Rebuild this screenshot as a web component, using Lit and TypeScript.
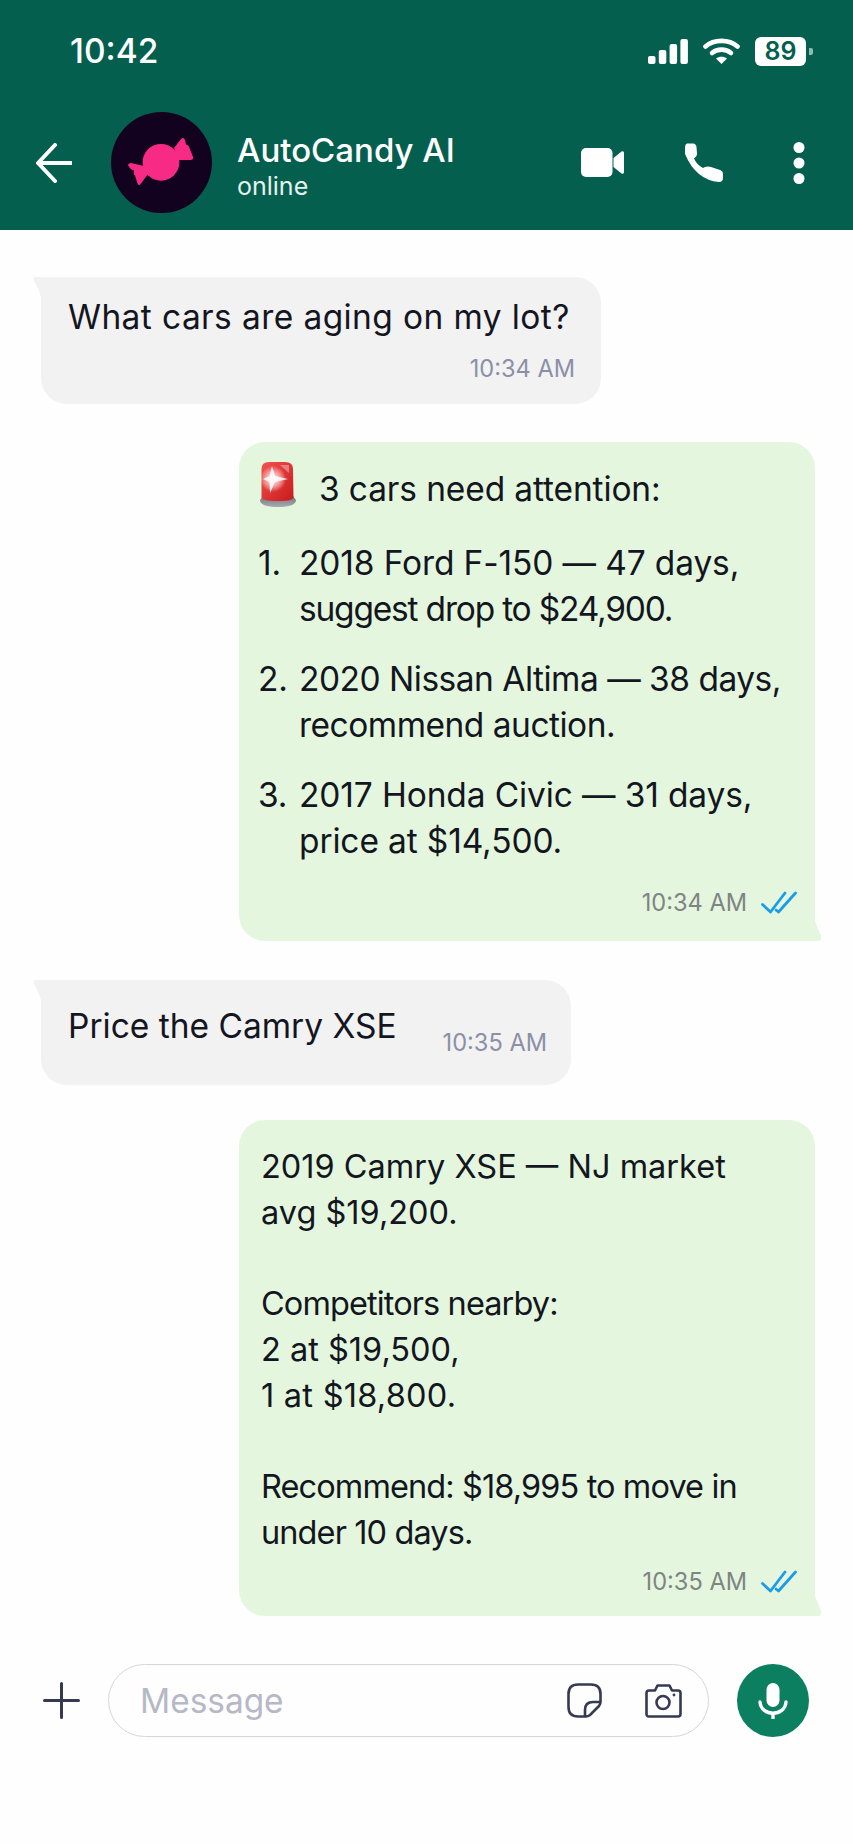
import { LitElement, html, css, svg } from 'lit';
import { customElement } from 'lit/decorators.js';

const checks = html`<svg class="checks" viewBox="0 0 36 24" width="36" height="24" fill="none" stroke="#1b9ce9" stroke-width="2.8" stroke-linecap="round" stroke-linejoin="round">
  <path d="M1.5 13.5 L9.5 21 L24 2" /><path d="M15 19 L17.5 21 L34.5 2" />
</svg>`;

const tailLeft = html`<svg class="tail tail-left" viewBox="0 0 10 20" width="10" height="20"><path d="M10 0 H3 Q-1 0 1 4 Q5 10 8 20 H10 Z" fill="#f2f2f3"/></svg>`;
const tailRight = html`<svg class="tail tail-right" viewBox="0 0 8 20" width="8" height="20"><path d="M0 20 H4 Q8 20 7 15 L1 0 H0 Z" fill="#e4f7de"/></svg>`;

@customElement('app-root')
export class AppRoot extends LitElement {
  static styles = css`
    :host {
      display: block;
      width: 853px;
      height: 1844px;
      background: #fefefe;
      font-family: Inter, 'Liberation Sans', sans-serif;
      color: #14161f;
      overflow: hidden;
    }
    .top { background: #045f4e; height: 230px; color: #fff; display: flex; flex-direction: column; }
    .status { height: 102px; display: flex; align-items: center; justify-content: space-between; padding: 0 40px 0 70px; }
    .clock { font-size: 33.5px; font-weight: 500; }
    .status-icons { display: flex; align-items: center; gap: 15px; }
    .battery { width: 51px; height: 29px; background: #fff; border-radius: 6px; color: #045f4e; font-size: 25px; font-weight: 600; display: flex; align-items: center; justify-content: center; }
    .cap { width: 4px; height: 7px; background: #8fbcb1; border-radius: 0 2px 2px 0; margin-left: -12px; }
    .bar { display: flex; align-items: center; padding: 10px 0 0 36px; }
    .avatar { width: 101px; height: 101px; margin-left: 39px; flex: none; }
    .who { margin-left: 25px; padding-top: 7px; flex: 1; display: flex; flex-direction: column; }
    .name { font-size: 33px; font-weight: 500; line-height: 38px; }
    .online { font-size: 25px; line-height: 32px; margin-top: 1px; color: #e6f2ef; }
    .actions { display: flex; align-items: center; padding-right: 48px; }
    .actions .phone { margin: 0 69px 0 60px; }

    .chat { display: flex; flex-direction: column; padding: 47px 38px 0 41px; }
    .bubble { position: relative; box-sizing: border-box; font-size: 33.5px; line-height: 46px; border-radius: 26px; }
    .in { background: #f2f2f3; align-self: flex-start; border-top-left-radius: 0; }
    .out { background: #e4f7de; align-self: flex-end; width: 576px; border-bottom-right-radius: 0; }
    .tail { position: absolute; }
    .tail-left { top: 0; left: -8px; }
    .tail-right { bottom: 0; right: -7px; }
    .q1 { width: 560px; height: 127px; padding: 17px 26px 0 27px; }
    .q1 .text { letter-spacing: 0.4px; }
    .q2 { width: 530px; height: 105px; margin-top: 39px; padding: 23px 24px 0 27px; display: flex; justify-content: space-between; }
    .q2 .time { margin-top: 25px; }
    .a1 { height: 499px; margin-top: 38px; padding: 24px 18px 0 19px; letter-spacing: -0.13px; }
    .a2 { height: 496px; margin-top: 35px; padding: 24px 18px 0 22px; font-size: 32.5px; }
    .a2 p { margin: 0 0 45px; }
    .time { font-size: 23.6px; line-height: 30px; color: #8b90a6; white-space: nowrap; letter-spacing: 0; }
    .out .time { color: #808484; }
    .meta { display: flex; justify-content: flex-end; align-items: center; gap: 14px; }
    .q1 .meta { margin-top: 14px; }
    .a1 .meta { margin-top: 24px; }
    .a2 .meta { margin-top: 11px; }
    .alert { display: flex; align-items: center; gap: 23px; height: 46px; padding-left: 2px; }
    .siren { margin-bottom: 10px; flex: none; }
    .list { margin: 28px 0 0; padding: 0; list-style: none; display: flex; flex-direction: column; gap: 24px; }
    .list li { display: grid; grid-template-columns: 41px 1fr; }
    .tight { letter-spacing: -0.5px; }
    .tighter { letter-spacing: -0.9px; }
    .tightest { letter-spacing: -1.2px; }
    .wide { letter-spacing: 0.25px; }

    .composer { display: flex; align-items: center; padding: 48px 44px 0 43px; }
    .pill { box-sizing: border-box; width: 601px; height: 73px; margin-left: 28px; border: 1.5px solid #d6d6dc; border-radius: 37px; display: flex; align-items: center; padding: 0 26px 0 31px; }
    .placeholder { flex: 1; font-size: 33.4px; color: #b6b8c6; }
    .pill .sticker { margin-right: 43px; }
    .mic { width: 72px; height: 73px; margin-left: 28px; border-radius: 50%; background: #0b7f5f; display: flex; align-items: center; justify-content: center; flex: none; }
  `;

  render() {
    return html`
      <div class="top">
        <div class="status">
          <span class="clock">10:42</span>
          <div class="status-icons">
            <svg width="40" height="25" viewBox="0 0 40 25" fill="#fff">
              <rect x="0" y="17" width="7.5" height="8" rx="2"/><rect x="10.8" y="11" width="7.5" height="14" rx="2"/>
              <rect x="21.6" y="5" width="7.5" height="20" rx="2"/><rect x="32.4" y="0" width="7.5" height="25" rx="2"/>
            </svg>
            <svg width="37" height="26" viewBox="0 0 37 26" fill="none" stroke="#fff" stroke-width="4.6" stroke-linecap="round">
              <path d="M2.5 8.5 C11 1 26 1 34.5 8.5"/><path d="M9 15 C14 10.5 23 10.5 28 15"/>
              <path d="M18.5 26 L13 20.5 C16 18 21 18 24 20.5 Z" fill="#fff" stroke="none"/>
            </svg>
            <span class="battery">89</span><span class="cap"></span>
          </div>
        </div>
        <div class="bar">
          <svg width="36" height="40" viewBox="0 0 36 40" fill="none" stroke="#fff" stroke-width="4" stroke-linecap="round" stroke-linejoin="round">
            <path d="M19 2 L2 20 L19 38"/><path d="M3 20 H35"/>
          </svg>
          <svg class="avatar" viewBox="0 0 101 101">
            <circle cx="50.5" cy="50.5" r="50.5" fill="#13021f"/>
            <g fill="#f72a85">
              <path d="M33 54 L20 51 Q16 51.5 17.5 54 Q20 58 23 58.5 Q22 62 24 63.5 L26.5 71.5 Q28 74.5 30 71.5 L37 62 Z"/>
              <path d="M63 36 L70 27 Q72.5 24.5 74 28 L75 32.5 Q78 33 78.5 36 L82 45 Q83 48 79 48 L68 48 Z"/>
              <circle cx="50" cy="50.3" r="18.4"/>
            </g>
          </svg>
          <div class="who">
            <span class="name">AutoCandy AI</span>
            <span class="online">online</span>
          </div>
          <div class="actions">
            <svg width="43" height="29" viewBox="0 0 43 29" fill="#fff">
              <rect x="0" y="0" width="31.5" height="29" rx="5"/><path d="M32.5 10 L40.5 3.5 Q43 2.5 43 5 V24 Q43 26.5 40.5 25.5 L32.5 19 Z"/>
            </svg>
            <svg class="phone" width="40" height="40" viewBox="0 0 40 40" fill="#fff">
              <path d="M3 0.5 H9 Q12 0.5 12.5 4 L13 11 Q13 13 11 14.5 L10 15.5 Q13 22 19 25 L21 24 Q24 23 27 24 L36 27 Q39 28 39 31 V35 Q39 39 35 39 Q12 37 1 11 V4 Q1 1 3 0.5 Z"/>
            </svg>
            <svg width="12" height="42" viewBox="0 0 12 42" fill="#fff">
              <circle cx="6" cy="5.5" r="5.5"/><circle cx="6" cy="21" r="5.5"/><circle cx="6" cy="36.5" r="5.5"/>
            </svg>
          </div>
        </div>
      </div>

      <div class="chat">
        <div class="bubble in q1">
          ${tailLeft}
          <div class="text">What cars are aging on my lot?</div>
          <div class="meta"><span class="time">10:34 AM</span></div>
        </div>

        <div class="bubble out a1">
          ${tailRight}
          <div class="alert">
            ${this.siren()}
            <span>3 cars need attention:</span>
          </div>
          <ol class="list">
            <li><span>1.</span><span>2018 Ford F-150 — 47 days,<br /><span class="tightest">suggest drop to $24,900.</span></span></li>
            <li><span>2.</span><span><span class="tight">2020 Nissan Altima — 38 days,</span><br /><span class="tight">recommend auction.</span></span></li>
            <li><span>3.</span><span>2017 Honda Civic — 31 days,<br />price at $14,500.</span></li>
          </ol>
          <div class="meta"><span class="time">10:34 AM</span>${checks}</div>
        </div>

        <div class="bubble in q2">
          ${tailLeft}
          <span>Price the Camry XSE</span>
          <span class="time">10:35 AM</span>
        </div>

        <div class="bubble out a2">
          ${tailRight}
          <p>2019 Camry XSE — NJ market<br />avg $19,200.</p>
          <p><span class="tighter">Competitors nearby:</span><br />2 at $19,500,<br /><span class="wide">1 at $18,800.</span></p>
          <div><span class="tighter">Recommend: $18,995 to move in</span><br /><span class="tighter">under 10 days.</span></div>
          <div class="meta"><span class="time">10:35 AM</span>${checks}</div>
        </div>
      </div>

      <div class="composer">
        <svg width="37" height="37" viewBox="0 0 37 37" stroke="#343a52" stroke-width="3" stroke-linecap="round">
          <path d="M18.5 1.5 V35.5 M1.5 18.5 H35.5"/>
        </svg>
        <div class="pill">
          <span class="placeholder">Message</span>
          <svg class="sticker" width="35" height="35" viewBox="0 0 35 35" fill="none" stroke="#343a52" stroke-width="2.6" stroke-linejoin="round">
            <path d="M11 1.5 H24 Q33.5 1.5 33.5 11 V19 Q33.5 21 32 23 L23 32 Q21 33.5 19 33.5 H11 Q1.5 33.5 1.5 24 V11 Q1.5 1.5 11 1.5 Z"/>
            <path d="M33 19 H26 Q18 19 18 27 V33.5"/>
          </svg>
          <svg width="37" height="34" viewBox="0 0 37 34" fill="none" stroke="#343a52" stroke-width="2.6" stroke-linejoin="round">
            <path d="M4 6.5 H10 L12.5 1.5 H24.5 L27 6.5 H33 Q35.5 6.5 35.5 9 V30 Q35.5 32.5 33 32.5 H4 Q1.5 32.5 1.5 30 V9 Q1.5 6.5 4 6.5 Z"/>
            <circle cx="18" cy="18.5" r="6.5"/><circle cx="29" cy="11" r="1.4" fill="#343a52" stroke="none"/>
          </svg>
        </div>
        <div class="mic">
          <svg width="32" height="36" viewBox="0 0 32 36" fill="none" stroke="#fff" stroke-width="3.4" stroke-linecap="round">
            <rect x="9.5" y="0" width="13" height="24" rx="6.5" fill="#fff" stroke="none"/>
            <path d="M3 19 C4 34 28 34 29 19"/><path d="M16 31 V36"/>
          </svg>
        </div>
      </div>
    `;
  }

  siren() {
    return html`<svg class="siren" width="36" height="45" viewBox="0 0 36 45">
      <defs>
        <linearGradient id="dome" x1="0" y1="0" x2="1" y2="1">
          <stop offset="0" stop-color="#f2524f" /><stop offset="1" stop-color="#c9191c" />
        </linearGradient>
        <linearGradient id="base" x1="0" y1="0" x2="0" y2="1">
          <stop offset="0" stop-color="#6f7276" /><stop offset="1" stop-color="#a9acb0" />
        </linearGradient>
        <radialGradient id="glow"><stop offset="0" stop-color="#fff" /><stop offset="0.35" stop-color="#ffd9d6" stop-opacity="0.85" /><stop offset="1" stop-color="#fff" stop-opacity="0" /></radialGradient>
      </defs>
      ${svg`<path d="M0 38 Q0 45 18 45 Q36 45 36 38 L33 34 H3 Z" fill="url(#base)"/>
      <path d="M1.5 7 Q1.5 0 9 0 H25 Q33 0 33 7 L33.5 35 Q33.5 39 18 39 Q1.5 39 1.5 35 Z" fill="url(#dome)"/>
      <circle cx="13" cy="17" r="13" fill="url(#glow)"/>
      <path d="M12 4 L15 14 L28 17 L15 20 L10 31 L9.5 20 L3 17 L9.5 14 Z" fill="#fff" opacity="0.85"/>
      <path d="M20 3 L29 3 L29 11 Z" fill="#fff" opacity="0.35"/>`}
    </svg>`;
  }
}
